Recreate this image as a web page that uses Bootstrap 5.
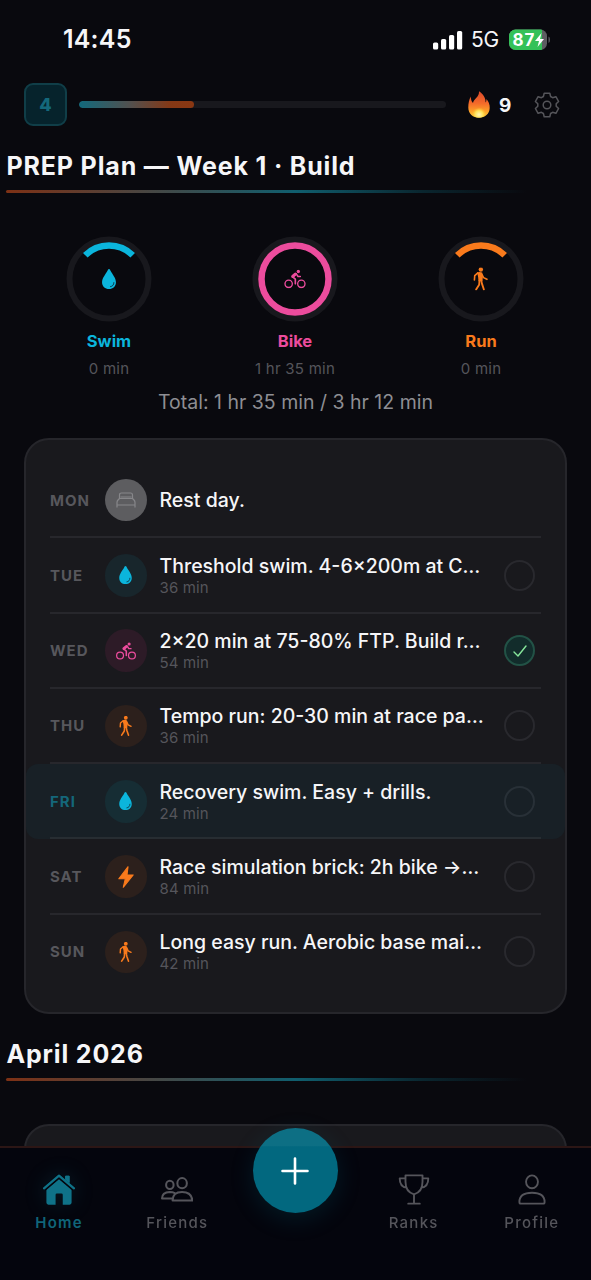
<!DOCTYPE html>
<html lang="en">
<head>
<meta charset="utf-8">
<meta name="viewport" content="width=device-width, initial-scale=1">
<title>PREP Plan</title>
<link href="https://cdn.jsdelivr.net/npm/bootstrap@5.3.0/dist/css/bootstrap.min.css" rel="stylesheet">
<style>
  :root { --cyan:#0bb5dc; --pink:#ec4c9d; --orange:#f97a1c; --teal:#0f7288; }
  body { background:#09090e; color:#f6f6f8; font-family:Inter,"Liberation Sans",sans-serif; height:1280px; overflow:hidden; line-height:1; }
  .screen { height:1280px; overflow:hidden; }
  .screen > * { flex-shrink:0; }
  .statusbar { height:78px; padding:1px 41px 0 63px; }
  .clock { font-size:25px; font-weight:600; letter-spacing:.2px; }
  .net { font-size:21px; letter-spacing:-.2px; margin-left:8px; margin-right:10px; }
  .topbar { height:53px; padding:0 31px 0 24px; }
  .level { width:43px; height:43px; border-radius:9px; border:2px solid #103e48; background:#06232c; color:#14687b; font-size:18px; font-weight:800; }
  .xp { height:7px; width:367px; margin-left:12px; background:#18181d; border-radius:4px; --bs-progress-bar-bg:transparent; }
  .xp .progress-bar { border-radius:4px; background:linear-gradient(90deg,#12697c,#53504e 45%,#853815 80%,#8a3712); }
  .streak { font-size:19px; font-weight:700; margin-left:9.5px; padding-top:2px; }
  .section-title { font-size:25px; font-weight:700; line-height:32px; letter-spacing:.84px; padding-left:6.5px; margin:0; }
  .rule { height:3px; margin:8px 6px 0; border-radius:2px; background:linear-gradient(90deg,#7e3115,#474744 25%,#105e6e 50%,#0a262f 72%,rgba(9,9,14,0) 90%); }
  .rings { margin-top:43px; padding:0 17px 0 16px; }
  .rings .col { flex:1; }
  .ring-name { font-size:16.5px; font-weight:700; line-height:20px; margin-top:9px; }
  .muted { color:#55555b; }
  .ring-time { font-size:15px; line-height:18px; margin-top:9px; letter-spacing:.25px; }
  .total { color:#8e8e93; font-size:19.5px; line-height:24px; margin-top:12px; }
  .panel { margin:0 24px; border:2px solid #26262b; border-radius:25px; background:#19191d; }
  .plan { height:576px; margin-top:24px; padding:23px 0 22px; }
  .day-row { flex:1 1 0; margin:0 24px; padding-top:1px; border-bottom:2px solid #27272c; }
  .day-row:last-child { border-bottom-color:transparent; }
  .day { width:54.5px; color:#57575c; font-size:15px; font-weight:700; letter-spacing:1px; }
  .today { margin:0; padding:1px 24px 2px; border-bottom:0; position:relative; background:#182026; border-radius:12px; }
  .today::after { content:""; position:absolute; left:24px; right:24px; bottom:0; height:2px; background:#272d32; }
  .today .day { color:#14677a; }
  .disc { width:42.5px; height:42.5px; margin-right:12.5px; flex:none; }
  .d-swim { background:#18262c; } .today .d-swim { background:#162d34; }
  .d-bike { background:#2d1b27; } .d-run { background:#2c201c; } .d-rest { background:#5d5d60; }
  .what { font-size:19.5px; font-weight:500; line-height:24px; white-space:nowrap; }
  .dur { font-size:15px; line-height:18px; margin-top:1px; letter-spacing:.15px; }
  .tick { width:31px; height:31px; flex:none; margin-right:6px; border:2px solid #29292e; }
  .tick.done { background:#122c2b; border-color:#225246; }
  .today .tick { border-color:#283037; }
  .swim { color:var(--cyan); } .bike { color:var(--pink); } .run { color:var(--orange); }
  .tabs { height:134px; background:#04050d; border-top:2px solid #2c1615; }
  .tabs .tab { width:20%; padding-top:26px; color:#55555b; }
  .tab span { font-size:15px; font-weight:500; line-height:18px; letter-spacing:1.25px; margin-top:9px; }
  .tabs .tab.active { color:var(--teal); }
  .tab.active span { font-weight:600; color:#10657a; }
  .tab.active svg { filter:drop-shadow(0 0 10px rgba(15,114,136,.2)); }
  .add { width:85px; height:85px; margin-top:-20px; background:linear-gradient(#0d6f84 21%,#02687f 22%); box-shadow:0 6px 24px rgba(6,110,135,.2); }
</style>
</head>
<body>
<svg width="0" height="0" class="position-absolute" aria-hidden="true">
  <symbol id="drop" viewBox="0 0 41 59"><path fill="currentColor" d="M20.500 0C23 0 24 3 25 5C30 15 41 26 41 39C41 51 32 59 20.500 59S0 51 0 39C0 26 11 15 16 5C17 3 18 0 20.500 0Z"/><path d="M35 40C35 47 31 51 25 52" fill="none" stroke="#0b2a35" stroke-width="2.500" stroke-linecap="round"/></symbol>
  <symbol id="bike" viewBox="0 0 64 57"><g fill="none" stroke="currentColor" stroke-linecap="round" stroke-linejoin="round"><circle cx="13" cy="43" r="11" stroke-width="4"/><circle cx="51" cy="43" r="11" stroke-width="4"/><path d="M34 13L25 22L33 29V43" stroke-width="5"/><path d="M33 14L25 21" stroke-width="9"/><path d="M36 13L41 21H48" stroke-width="4.500"/></g><circle cx="42" cy="6" r="5" fill="currentColor"/></symbol>
  <symbol id="walk" viewBox="0 0 44 68"><circle cx="23" cy="6" r="6.500" fill="currentColor"/><path fill="currentColor" d="M12 15Q20 11 27 15L29 25L28 41H16L15 28Z"/><g fill="none" stroke="currentColor" stroke-width="4.800" stroke-linecap="round" stroke-linejoin="round"><path d="M14 16L5 24L4 37"/><path d="M26 20L31 30L41 35"/><path d="M24 38L27 50L32 65" stroke-width="5.500"/><path d="M19 39L18 51L9 65" stroke-width="5.500"/></g></symbol>
  <symbol id="bolt" viewBox="0 0 46 64"><path d="M29 2L2 37H21L15 62L44 26H26Z" fill="currentColor" stroke="currentColor" stroke-width="3" stroke-linejoin="round"/></symbol>
</svg>

<div class="screen d-flex flex-column">
  <div class="statusbar d-flex align-items-center">
    <div class="clock me-auto">14:45</div>
    <svg width="31" height="20" viewBox="0 0 31 20" fill="#fff"><rect x="1" y="12.500" width="5.200" height="7" rx="1.600"/><rect x="9" y="9" width="5.200" height="10.500" rx="1.600"/><rect x="17" y="5" width="5.200" height="14.500" rx="1.600"/><rect x="25" y="1" width="5.200" height="18.500" rx="1.600"/></svg>
    <div class="net">5G</div>
    <svg width="41" height="22" viewBox="0 0 41 22"><defs><clipPath id="cell"><rect y=".5" width="38" height="20.500" rx="6.500"/></clipPath></defs><g clip-path="url(#cell)"><rect width="38" height="22" fill="#5d5d62"/><rect width="33" height="22" fill="#35c159"/></g><path d="M39.500 7.500Q41 8 41 10.800T39.500 14Z" fill="#5d5d62"/><text x="3.500" y="17" font-size="17" font-weight="700" fill="#fff" textLength="22">87</text><path d="M32.500 4L26 12H30L28.500 18L35 10H31Z" fill="#fff"/></svg>
  </div>

  <div class="topbar d-flex align-items-center">
    <div class="level d-flex align-items-center justify-content-center">4</div>
    <div class="progress xp"><div class="progress-bar" style="width:31.300%"></div></div>
    <svg width="22" height="27" viewBox="0 0 22 27" style="margin-left:21.500px"><defs><linearGradient id="fl" x2="0" y2="1"><stop stop-color="#d9492a"/><stop offset=".45" stop-color="#f4692a"/><stop offset=".75" stop-color="#fda028"/><stop offset="1" stop-color="#fdd040"/></linearGradient><radialGradient id="core" cy=".8"><stop stop-color="#fff7b8"/><stop offset=".55" stop-color="#ffe052"/><stop offset="1" stop-color="#ffb52c" stop-opacity="0"/></radialGradient></defs><path fill="url(#fl)" d="M11 .3C15 3 18 7 17.500 11.500C18.500 10.500 18.500 9 18.200 8C20.500 10 22 13.500 21.700 17C21.500 23 17 26.700 11 26.700S.3 23 .3 16.500C.3 12 1 9 2.800 5.500C2.800 8.500 3.500 10.500 5 12C5.500 8 11.500 6 11 .3Z"/><path fill="url(#core)" d="M12 12C13 15 18 16 18.500 21C18 25 15 26.500 11 26.500S4 24.500 3.500 20.500C4 18 5 17 6 15.500C7 18 9 18 10 17C11.500 15.500 12 14 12 12Z"/></svg>
    <div class="streak">9</div>
    <svg class="ms-auto" width="26" height="26" viewBox="-13 -13 26 26" fill="none" stroke="#55555a" stroke-width="1.500" stroke-linejoin="round"><circle r="3.800"/><path d="M-2.800-11.800H2.800L3.600-8.500L5.600-7.300L8.900-8.300L11.600-3.500L9.200-1.200V1.200L11.600 3.500L8.900 8.300L5.600 7.300L3.600 8.500L2.800 11.800H-2.800L-3.600 8.500L-5.600 7.300L-8.900 8.300L-11.600 3.500L-9.200 1.200V-1.200L-11.600-3.500L-8.900-8.300L-5.600-7.300L-3.600-8.500Z"/></svg>
  </div>

  <h1 class="section-title" style="margin-top:19px">PREP Plan — Week 1 · Build</h1>
  <div class="rule"></div>

  <div class="rings d-flex text-center">
    <div class="col"><svg width="86" height="86" viewBox="-43 -43 86 86"><circle r="39.500" fill="none" stroke="#18181d" stroke-width="6"/><path d="M-23.700-23.700A33.500 33.500 0 0 1 23.700-23.700" fill="none" stroke="#0bb5dc" stroke-width="6.500"/><use href="#drop" class="swim" x="-7" y="-10" width="14" height="20"/></svg>
      <div class="ring-name swim">Swim</div><div class="ring-time muted">0 min</div></div>
    <div class="col"><svg width="86" height="86" viewBox="-43 -43 86 86"><circle r="39.500" fill="none" stroke="#18181d" stroke-width="6"/><circle r="33.500" fill="none" stroke="#ec4c9d" stroke-width="6.500"/><use href="#bike" class="bike" x="-11" y="-9.500" width="22" height="19"/></svg>
      <div class="ring-name bike">Bike</div><div class="ring-time muted">1 hr 35 min</div></div>
    <div class="col"><svg width="86" height="86" viewBox="-43 -43 86 86"><circle r="39.500" fill="none" stroke="#18181d" stroke-width="6"/><path d="M-23.700-23.700A33.500 33.500 0 0 1 23.700-23.700" fill="none" stroke="#f97a1c" stroke-width="6.500"/><use href="#walk" class="run" x="-8" y="-11.500" width="15" height="23"/></svg>
      <div class="ring-name run">Run</div><div class="ring-time muted">0 min</div></div>
  </div>
  <div class="total text-center">Total: 1 hr 35 min / 3 hr 12 min</div>

  <div class="panel plan d-flex flex-column">
    <div class="day-row d-flex align-items-center"><div class="day">MON</div>
      <div class="disc d-rest rounded-circle d-flex align-items-center justify-content-center"><svg width="20" height="16" viewBox="0 0 20 16" fill="none" stroke="#87878a" stroke-width="1.200" stroke-linejoin="round"><path d="M3.500 6.500V3Q3.500 1 5.500 1H14.500Q16.500 1 16.500 3V6.500M1 15.500V10.500Q1 9 2 8L3.500 6.500H16.500L18 8Q19 9 19 10.500V15.500M1 13H19M4.500 5H15.500"/></svg></div>
      <div class="what me-auto">Rest day.</div></div>
    <div class="day-row d-flex align-items-center"><div class="day">TUE</div>
      <div class="disc d-swim swim rounded-circle d-flex align-items-center justify-content-center"><svg width="13" height="18"><use href="#drop"/></svg></div>
      <div class="me-auto"><div class="what">Threshold swim. 4-6×200m at C…</div><div class="dur muted">36 min</div></div><div class="tick rounded-circle"></div></div>
    <div class="day-row d-flex align-items-center"><div class="day">WED</div>
      <div class="disc d-bike bike rounded-circle d-flex align-items-center justify-content-center"><svg width="20" height="18"><use href="#bike"/></svg></div>
      <div class="me-auto"><div class="what">2×20 min at 75-80% FTP. Build r…</div><div class="dur muted">54 min</div></div><div class="tick done rounded-circle d-flex align-items-center justify-content-center"><svg width="14" height="12" viewBox="0 0 14 12" fill="none" stroke="#86e69b" stroke-width="1.400" stroke-linecap="round" stroke-linejoin="round"><path d="M1 7L5 11L13 1"/></svg></div></div>
    <div class="day-row d-flex align-items-center"><div class="day">THU</div>
      <div class="disc d-run run rounded-circle d-flex align-items-center justify-content-center"><svg width="13" height="20"><use href="#walk"/></svg></div>
      <div class="me-auto"><div class="what">Tempo run: 20-30 min at race pa…</div><div class="dur muted">36 min</div></div><div class="tick rounded-circle"></div></div>
    <div class="day-row today d-flex align-items-center"><div class="day">FRI</div>
      <div class="disc d-swim swim rounded-circle d-flex align-items-center justify-content-center"><svg width="13" height="18"><use href="#drop"/></svg></div>
      <div class="me-auto"><div class="what">Recovery swim. Easy + drills.</div><div class="dur muted">24 min</div></div><div class="tick rounded-circle"></div></div>
    <div class="day-row d-flex align-items-center"><div class="day">SAT</div>
      <div class="disc d-run run rounded-circle d-flex align-items-center justify-content-center"><svg width="16" height="22"><use href="#bolt"/></svg></div>
      <div class="me-auto"><div class="what">Race simulation brick: 2h bike →…</div><div class="dur muted">84 min</div></div><div class="tick rounded-circle"></div></div>
    <div class="day-row d-flex align-items-center"><div class="day">SUN</div>
      <div class="disc d-run run rounded-circle d-flex align-items-center justify-content-center"><svg width="13" height="20"><use href="#walk"/></svg></div>
      <div class="me-auto"><div class="what">Long easy run. Aerobic base mai…</div><div class="dur muted">42 min</div></div><div class="tick rounded-circle"></div></div>
  </div>

  <h2 class="section-title" style="margin-top:24px">April 2026</h2>
  <div class="rule"></div>
  <div class="panel" style="height:200px;margin-top:43px"></div>
</div>

<nav class="tabs fixed-bottom d-flex align-items-start">
  <div class="tab active d-flex flex-column align-items-center">
    <svg width="32" height="31" viewBox="0 0 94 89" fill="currentColor"><path d="M10 44L47 13L84 44V83Q84 89 78 89H58V60Q58 56 54 56H41Q37 56 37 60V89H16Q10 89 10 83Z"/><path d="M65 6Q65 4 67 4H76Q78 4 78 6V32H65Z"/><path d="M3 43L47 6L91 43" fill="none" stroke="#04050d" stroke-width="13"/><path d="M3 41L47 4L91 41" fill="none" stroke="currentColor" stroke-width="7" stroke-linecap="round" stroke-linejoin="round"/><path d="M65 6Q65 4 67 4H76Q78 4 78 6V27L65 16Z"/></svg>
    <span>Home</span></div>
  <div class="tab d-flex flex-column align-items-center">
    <svg width="32" height="31" viewBox="0 0 94 89" fill="none" stroke="currentColor" stroke-width="6" stroke-linejoin="round"><ellipse cx="26" cy="31" rx="11" ry="12"/><ellipse cx="62" cy="26" rx="14" ry="15"/><path d="M34 77Q34 52 62 52T92 77H37Q34 77 34 77ZM42 56Q34 52 26 52Q3 53 3 71H33"/></svg>
    <span>Friends</span></div>
  <div class="tab p-0 d-flex justify-content-center">
    <div class="add rounded-circle d-flex align-items-center justify-content-center"><svg width="28" height="28" viewBox="0 0 28 28" stroke="#fff" stroke-width="2.600" stroke-linecap="round"><path d="M14 1.500V26.500M1.500 14H26.500"/></svg></div></div>
  <div class="tab d-flex flex-column align-items-center">
    <svg width="32" height="31" viewBox="-3 0 94 89" fill="none" stroke="currentColor" stroke-width="5.500" stroke-linecap="round" stroke-linejoin="round"><path d="M19 3H69V22Q69 52 44 59Q19 52 19 22ZM19 12H2Q2 36 22 39M69 12H86Q86 36 66 39M44 59V86M27 86H61"/></svg>
    <span>Ranks</span></div>
  <div class="tab d-flex flex-column align-items-center">
    <svg width="32" height="31" viewBox="-8 0 94 89" fill="none" stroke="currentColor" stroke-width="5.500" stroke-linejoin="round"><ellipse cx="39" cy="22" rx="17.500" ry="19"/><path d="M2 81Q2 54 39 54T76 81Q76 86 72 86H6Q2 86 2 81Z"/></svg>
    <span>Profile</span></div>
</nav>
<script src="https://cdn.jsdelivr.net/npm/bootstrap@5.3.0/dist/js/bootstrap.bundle.min.js"></script>
</body>
</html>
